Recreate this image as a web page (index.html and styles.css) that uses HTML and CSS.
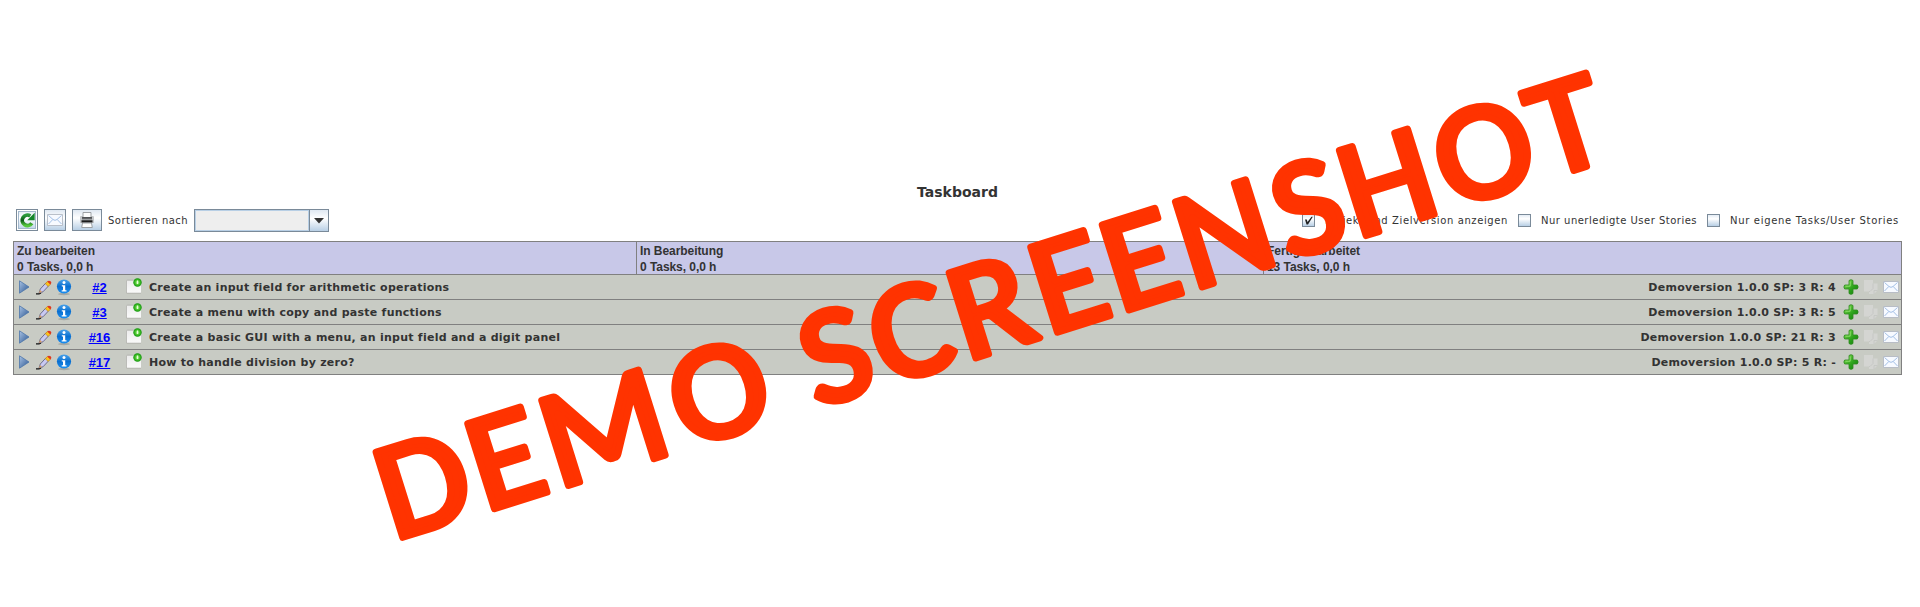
FILE: index.html
```html
<!DOCTYPE html>
<html lang="de">
<head>
<meta charset="utf-8">
<title>Taskboard</title>
<link rel="stylesheet" href="styles.css">
</head>
<body>
<svg class="defs" width="0" height="0">
  <defs>
    <linearGradient id="gPlay" x1="0" y1="0" x2="1" y2="1"><stop offset="0" stop-color="#a9c3e4"/><stop offset="1" stop-color="#2a5590"/></linearGradient>
    <linearGradient id="gInfo" x1="0" y1="0" x2="0" y2="1"><stop offset="0" stop-color="#4ba3ea"/><stop offset=".5" stop-color="#0a6fd0"/><stop offset="1" stop-color="#1b8ff0"/></linearGradient>
    <linearGradient id="gPlus" x1="0" y1="0" x2="1" y2="1"><stop offset="0" stop-color="#8be05a"/><stop offset=".55" stop-color="#2fa51d"/><stop offset="1" stop-color="#0d7a0a"/></linearGradient>
    <linearGradient id="gPaper" x1="0" y1="0" x2="0" y2="1"><stop offset="0" stop-color="#ececec"/><stop offset="1" stop-color="#fafafa"/></linearGradient>
    <radialGradient id="gBall"><stop offset="0" stop-color="#b8f59a"/><stop offset=".5" stop-color="#4cc72f"/><stop offset="1" stop-color="#12960c"/></radialGradient>
    <linearGradient id="gReload" x1="0" y1="0" x2="0" y2="1"><stop offset="0" stop-color="#2b9a3c"/><stop offset=".5" stop-color="#0a5a16"/><stop offset="1" stop-color="#55c63c"/></linearGradient>
  </defs>
  <symbol id="play" viewBox="0 0 11 14"><path d="M.5 .8V13.2L10 7Z" fill="url(#gPlay)" stroke="#4d76ab" stroke-width=".8"/></symbol>
  <symbol id="pencil" viewBox="0 0 16 15">
    <path d="M0 13.800h3l2-1" fill="none" stroke="#111" stroke-width="1.300"/>
    <path d="M3 13l1.300-4L10 2.800l3 2.600-6 6.400z" fill="#c9c9f2" stroke="#55557a" stroke-width=".8"/>
    <path d="M3 13.200l1-3.200 2 1.800z" fill="#d9a066"/>
    <path d="M9.200 3.700l2.200-2.200 3 2.700-2.200 2.200z" fill="#f9c21c" stroke="#b07b10" stroke-width=".5"/>
    <path d="M11.200 1.500q1.600-1.500 3.400-.2 1.500 1.500-.2 3.100z" fill="#e0361e"/>
  </symbol>
  <symbol id="info" viewBox="0 0 16 17">
    <ellipse cx="8" cy="15" rx="6" ry="1.200" fill="#8f9390" opacity=".6"/>
    <circle cx="8" cy="7.500" r="7.100" fill="url(#gInfo)"/>
    <circle cx="8" cy="3.500" r="1.500" fill="#fff"/>
    <path d="M5.800 6.200h3.400v5h1.300v1.300H5.700v-1.300H7V7.500H5.800z" fill="#fff"/>
  </symbol>
  <symbol id="story" viewBox="0 0 17 16">
    <path d="M1.500 2.500h14.500v12.500h-14.500z" fill="url(#gPaper)"/>
    <path d="M1.500 15V3q0-.9.900-.9h6" fill="none" stroke="#b3b3ae" stroke-width=".8"/>
    <path d="M1.500 15.200h14.500" stroke="#b0b0aa" stroke-width=".8"/>
    <circle cx="12.500" cy="4.500" r="4.200" fill="url(#gBall)"/>
    <path d="M12.500 2.500v3.500" stroke="#e6ffd9" stroke-width="1.300"/>
  </symbol>
  <symbol id="plus" viewBox="0 0 16 16"><path d="M6 1.500q2-1.700 4 0V6h4.300q1.700 2 0 4H10v4.500q-2 1.700-4 0V10H1.700Q0 8 1.700 6H6z" fill="url(#gPlus)" stroke="#2d8a20" stroke-width=".8"/><path d="M7.200 2.500v4.700H2.500" fill="none" stroke="#a9ee84" stroke-width="1" opacity=".7"/></symbol>
  <symbol id="copy" viewBox="0 0 16 16"><path d="M1 1h9v3.500h4.500v7l-3.500 3.500H6v-2.500H1z" fill="#d4d5d2"/><path d="M10 4.500v5l-3 3H6M14.500 11.500H11V15" fill="none" stroke="#c3c4c1" stroke-width=".8"/></symbol>
  <symbol id="mail" viewBox="0 0 16 12"><path d="M.5.500h15v11H.5z" fill="#f7faff" stroke="#b3b9c3" stroke-width=".9"/><path d="M1.500 1.500L6 5.500Q8 7.200 10 5.500L14.500 1.500M1.500 10L5.800 5.500M14.500 10L10.200 5.500" fill="none" stroke="#a3c0e6" stroke-width="1"/></symbol>
  <symbol id="reload" viewBox="0 0 16 16">
    <path d="M12.800 11.200A5.200 5.200 0 1 1 11.300 4" fill="none" stroke="url(#gReload)" stroke-width="3.800"/>
    <path d="M15.700.8v7.400H8.200z" fill="#16862c"/>
  </symbol>
  <symbol id="printer" viewBox="0 0 16 16">
    <path d="M1 5q0-1 1-1h12q1 0 1 1v6H1z" fill="#c3c6c9"/>
    <path d="M4 .5h8v5H4z" fill="#fdfdfd" stroke="#94989c" stroke-width=".9"/>
    <path d="M3 5.200h10v1.600H3z" fill="#3c3e40"/><path d="M3 6.800h10v1.500H3z" fill="#9b9ea1"/><path d="M2.500 8.300h11v2.200h-11z" fill="#1c1c1c"/>
    <path d="M3.500 11h9l.8 4.500H2.700z" fill="#fdfdfd" stroke="#94989c" stroke-width=".9"/>
  </symbol>
</svg>

<main class="page">
  <h1 class="title">Taskboard</h1>

  <div class="toolbar">
    <button class="btn btn-focus"><svg width="16" height="16"><use href="#reload"/></svg></button>
    <button class="btn"><svg width="16" height="12"><use href="#mail"/></svg></button>
    <button class="btn btn-wide"><svg width="16" height="16"><use href="#printer"/></svg></button>
    <span class="label sort-label">Sortieren nach</span>
    <div class="select"><span class="select-value"></span><span class="select-arrow"><svg width="10" height="6"><path d="M0 0h10L5 5.500z" fill="#333"/></svg></span></div>
    <div class="filters">
      <span class="check"><svg width="9" height="9"><path d="M1 3.500h1.800L3.500 6 7.500.8h1.300L4 8.500H2.500z" fill="#222"/></svg></span><span class="label f1">Projekt und Zielversion anzeigen</span>
      <span class="check"></span><span class="label f2">Nur unerledigte User Stories</span>
      <span class="check"></span><span class="label f3">Nur eigene Tasks/User Stories</span>
    </div>
  </div>

  <section class="board">
    <div class="head">
      <div class="col">Zu bearbeiten<br>0 Tasks, 0,0 h</div>
      <div class="col">In Bearbeitung<br>0 Tasks, 0,0 h</div>
      <div class="col">Fertig bearbeitet<br>13 Tasks, 0,0 h</div>
    </div>
    <div class="row">
      <svg class="play" width="11" height="14"><use href="#play"/></svg><svg class="pencil" width="16" height="15"><use href="#pencil"/></svg><svg class="info" width="16" height="17"><use href="#info"/></svg>
      <a class="id" href="#">#2</a><svg class="story" width="17" height="16"><use href="#story"/></svg>
      <span class="name">Create an input field for arithmetic operations</span><span class="meta">Demoversion 1.0.0 SP: 3 R: 4</span>
      <svg class="act" width="16" height="16"><use href="#plus"/></svg><svg class="act" width="16" height="16"><use href="#copy"/></svg><svg class="act" width="16" height="12"><use href="#mail"/></svg>
    </div>
    <div class="row">
      <svg class="play" width="11" height="14"><use href="#play"/></svg><svg class="pencil" width="16" height="15"><use href="#pencil"/></svg><svg class="info" width="16" height="17"><use href="#info"/></svg>
      <a class="id" href="#">#3</a><svg class="story" width="17" height="16"><use href="#story"/></svg>
      <span class="name">Create a menu with copy and paste functions</span><span class="meta">Demoversion 1.0.0 SP: 3 R: 5</span>
      <svg class="act" width="16" height="16"><use href="#plus"/></svg><svg class="act" width="16" height="16"><use href="#copy"/></svg><svg class="act" width="16" height="12"><use href="#mail"/></svg>
    </div>
    <div class="row">
      <svg class="play" width="11" height="14"><use href="#play"/></svg><svg class="pencil" width="16" height="15"><use href="#pencil"/></svg><svg class="info" width="16" height="17"><use href="#info"/></svg>
      <a class="id" href="#">#16</a><svg class="story" width="17" height="16"><use href="#story"/></svg>
      <span class="name">Create a basic GUI with a menu, an input field and a digit panel</span><span class="meta">Demoversion 1.0.0 SP: 21 R: 3</span>
      <svg class="act" width="16" height="16"><use href="#plus"/></svg><svg class="act" width="16" height="16"><use href="#copy"/></svg><svg class="act" width="16" height="12"><use href="#mail"/></svg>
    </div>
    <div class="row">
      <svg class="play" width="11" height="14"><use href="#play"/></svg><svg class="pencil" width="16" height="15"><use href="#pencil"/></svg><svg class="info" width="16" height="17"><use href="#info"/></svg>
      <a class="id" href="#">#17</a><svg class="story" width="17" height="16"><use href="#story"/></svg>
      <span class="name">How to handle division by zero?</span><span class="meta">Demoversion 1.0.0 SP: 5 R: -</span>
      <svg class="act" width="16" height="16"><use href="#plus"/></svg><svg class="act" width="16" height="16"><use href="#copy"/></svg><svg class="act" width="16" height="12"><use href="#mail"/></svg>
    </div>
  </section>
</main>

<svg class="watermark" width="1920" height="607">
  <text transform="rotate(-17.4) scale(1.05 1)" y="633.300" x="203.800 294.800 367.100 495.700 600 626.200 695.700 775.200 856.700 928.100 1001 1097.600 1165.200 1259 1354.300">DEMO SCREENSHOT</text>
</svg>
</body>
</html>
```

FILE: styles.css
```css
* { box-sizing: border-box; }
body {
  margin: 0;
  height: 607px;
  overflow: hidden;
  background: #fff;
  color: #333;
  font-family: "DejaVu Sans", Verdana, sans-serif;
}
svg { display: block; flex: none; }
.defs { position: absolute; }
.page { padding: 184px 18px 0 13px; }
.title {
  margin: 0 0 9px;
  font-size: 14px;
  line-height: 16px;
  text-align: center;
}
.toolbar { display: flex; align-items: center; height: 23px; padding: 0 3px; }
.btn {
  display: flex;
  align-items: center;
  justify-content: center;
  width: 22px;
  height: 22px;
  margin: 0 6px 1px 0;
  padding: 0;
  border: 1px solid #7a8a99;
  background: linear-gradient(#dfe8f2, #fff 40%, #b8cfe5);
}
.btn-focus { box-shadow: inset 0 0 0 1px #fff, inset 0 0 0 2px #a3b8cc; }
.btn-wide { width: 30px; }
.label { font-size: 10px; line-height: 14px; white-space: nowrap; letter-spacing: 0.49px; }
.sort-label { width: 86px; }
.select { display: flex; width: 135px; height: 23px; border: 1px solid #7a8a99; }
.select-value { flex: 1; background: #eee; border: 1px solid #b8cfe5; }
.select-arrow {
  display: flex;
  align-items: center;
  justify-content: center;
  width: 19px;
  border-left: 1px solid #7a8a99;
  background: linear-gradient(#dfe8f2, #fff 40%, #b8cfe5);
}
.filters { display: flex; align-items: center; margin-left: auto; }
.check {
  display: flex;
  align-items: center;
  justify-content: center;
  width: 13px;
  height: 13px;
  margin-right: 10px;
  border: 1px solid #7a8a99;
  background: linear-gradient(#e4ecf5, #fff 35%, #b8cfe5);
}
.f1 { width: 193px; letter-spacing: 0.6px; }
.f2 { width: 166px; }
.f3 { width: 169px; letter-spacing: 0.69px; }
.board { margin-top: 9px; border: 1px solid #808080; border-bottom: 0; background: #c8cbc4; }
.head {
  display: grid;
  grid-template-columns: 622px 627px 1fr;
  height: 33px;
  border-bottom: 1px solid #808080;
  background: #c8c8e8;
}
.col {
  padding: 1px 0 0 3px;
  border-left: 1px solid #808080;
  font: bold 12px/16px "Liberation Sans", Arial, sans-serif;
  letter-spacing: -0.06px;
}
.col:first-child { border-left: 0; }
.row { display: flex; align-items: center; height: 25px; padding: 0 2px 0 5px; border-bottom: 1px solid #808080; }
.pencil { margin-left: 6px; }
.info { margin: 1px 0 0 4px; }
.id {
  width: 53px;
  padding: 1px 0 0 2px;
  color: #00f;
  font: bold 13px/16px "Liberation Sans", Arial, sans-serif;
  text-align: center;
}
.story { margin: 0 7px 2px 0; }
.name, .meta { padding-top: 1px; font-size: 11px; font-weight: bold; line-height: 16px; letter-spacing: 0.26px; white-space: nowrap; }
.name { flex: 1; }
.meta { margin-right: 3px; }
.act { margin-left: 4px; }
.watermark { position: absolute; left: 0; top: 0; pointer-events: none; }
.watermark text {
  font: 139px Carlito, Calibri, Lato, sans-serif;
  font-kerning: none;
  fill: #ff3300;
  stroke: #ff3300;
  stroke-width: 7px;
  stroke-linejoin: round;
}
```
